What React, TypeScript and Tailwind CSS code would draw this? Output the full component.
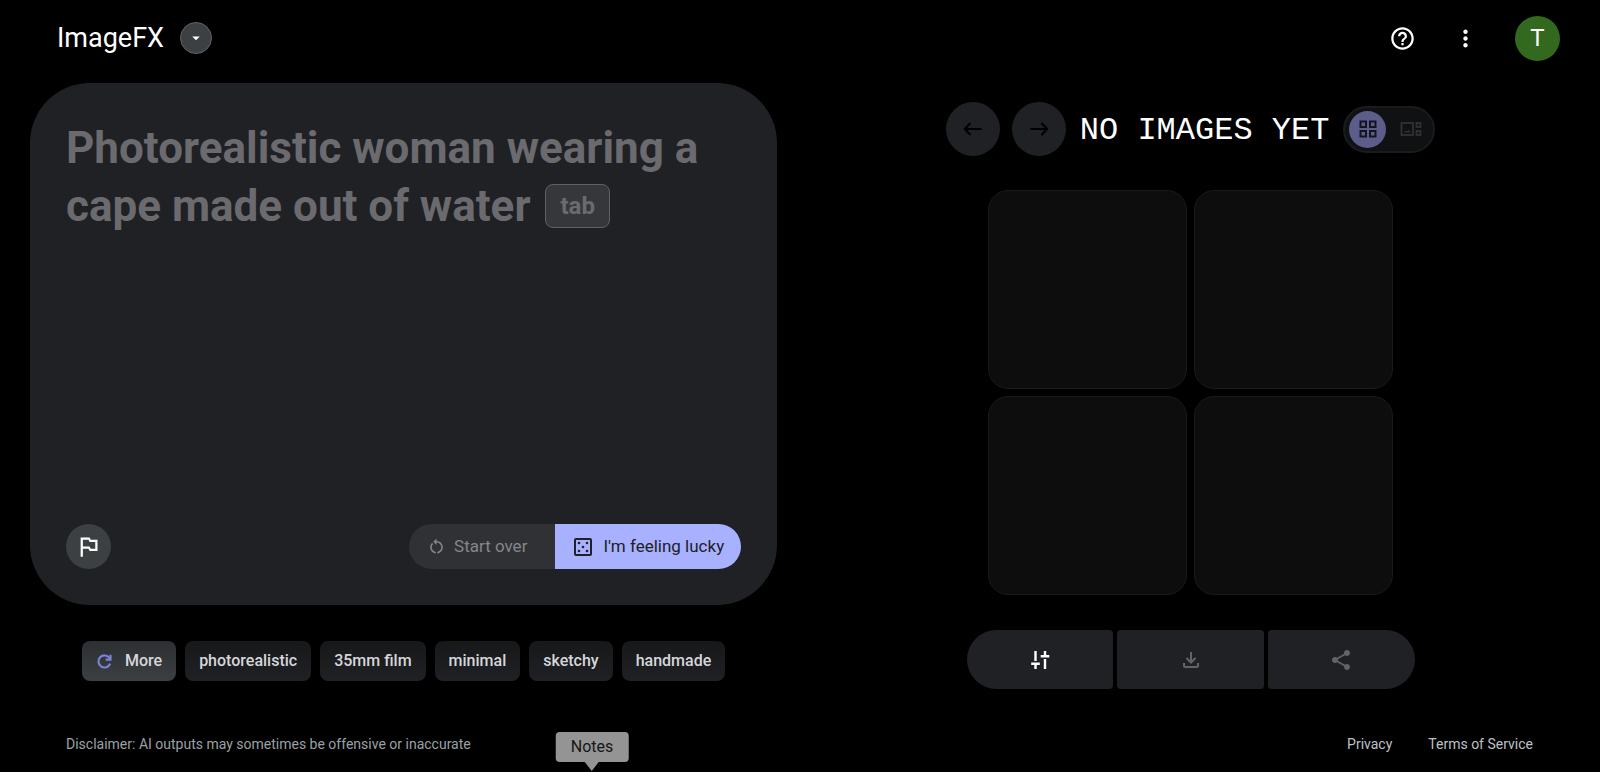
import { useState } from "react";
import {
  MdArrowDropDown,
  MdHelpOutline,
  MdMoreVert,
  MdOutlinedFlag,
  MdRestartAlt,
  MdShare,
} from "react-icons/md";

const SUGGESTIONS = [
  "photorealistic",
  "35mm film",
  "minimal",
  "sketchy",
  "handmade",
];

function ArrowIcon({ flipped = false }: { flipped?: boolean }) {
  return (
    <svg
      width="20"
      height="16"
      viewBox="0 0 20 16"
      fill="none"
      stroke="currentColor"
      strokeWidth="2"
      strokeLinejoin="round"
      className={flipped ? "rotate-180" : ""}
    >
      <path d="M18.5 8H2M7.5 2L1.8 8L7.5 14" />
    </svg>
  );
}

function RefreshIcon() {
  return (
    <svg width="17" height="17" viewBox="0 0 18 18" fill="none" stroke="currentColor" strokeWidth="2.2">
      <path d="M15 11.2A6.4 6.4 0 1 1 14.2 5.2L15.4 7" />
      <path d="M15.4 1.8V7H10.2" />
    </svg>
  );
}

function DiceIcon() {
  return (
    <svg width="18" height="18" viewBox="0 0 18 18" fill="currentColor">
      <rect x="1" y="1" width="16" height="16" rx="1" fill="none" stroke="currentColor" strokeWidth="2" />
      <circle cx="5" cy="5" r="1.3" />
      <circle cx="13" cy="5" r="1.3" />
      <circle cx="9" cy="9" r="1.3" />
      <circle cx="5" cy="13" r="1.3" />
      <circle cx="13" cy="13" r="1.3" />
    </svg>
  );
}

function GridIcon() {
  return (
    <svg width="18" height="18" viewBox="0 0 18 18" fill="none" stroke="currentColor" strokeWidth="2">
      <rect x="1.5" y="1.5" width="5.5" height="5.5" />
      <rect x="11" y="1.5" width="5.5" height="5.5" />
      <rect x="1.5" y="11" width="5.5" height="5.5" />
      <rect x="11" y="11" width="5.5" height="5.5" />
    </svg>
  );
}

function GalleryIcon() {
  return (
    <svg width="22" height="14" viewBox="0 0 22 14" fill="none" stroke="currentColor" strokeWidth="1.8">
      <rect x="1.5" y="1" width="11.5" height="12" />
      <rect x="16.5" y="1" width="4" height="4" />
      <rect x="16.5" y="9" width="4" height="4" />
      <path d="M3.8 10.5L5.6 8.4L7 9.6L8.8 8L10.8 10.5Z" fill="currentColor" stroke="none" />
    </svg>
  );
}

function TuneIcon() {
  return (
    <svg width="20" height="20" viewBox="0 0 20 20" fill="none" stroke="currentColor" strokeWidth="2.4">
      <path d="M5.5 1V11M1.2 13.8H9.8M5.5 13.8V19" />
      <path d="M15 1V6M10.7 6.2H19.3M15 9V19" />
    </svg>
  );
}

function DownloadIcon() {
  return (
    <svg width="18" height="18" viewBox="0 0 18 18" fill="none" stroke="currentColor" strokeWidth="2">
      <path d="M9 1V11M4.5 7L9 11.5L13.5 7" />
      <path d="M2 12V14.5Q2 16 3.5 16H14.5Q16 16 16 14.5V12" />
    </svg>
  );
}

function Header() {
  return (
    <header className="flex h-19 shrink-0 items-center justify-between pr-10 pl-[57px]">
      <div className="flex items-center gap-4">
        <h1 className="text-[27px] leading-8">ImageFX</h1>
        <button
          aria-label="Switch tool"
          className="flex size-8 items-center justify-center rounded-full border border-[#5f6368] bg-[#3c4043]"
        >
          <MdArrowDropDown size={18} />
        </button>
      </div>
      <div className="flex items-center">
        <button aria-label="Help" className="mr-9">
          <MdHelpOutline size={27} />
        </button>
        <button aria-label="More options" className="mr-9">
          <MdMoreVert size={27} />
        </button>
        <button
          aria-label="Account"
          className="flex size-[45px] items-center justify-center rounded-full bg-[#33691e] text-2xl"
        >
          T
        </button>
      </div>
    </header>
  );
}

function PromptCard() {
  const [prompt, setPrompt] = useState("");

  return (
    <section className="flex flex-1 flex-col justify-between rounded-[60px] bg-[#202124] p-9">
      <div className="relative min-h-32 flex-1">
        <label
          htmlFor="prompt"
          className="block text-[44px] leading-[58px] font-bold text-[#6b6a6f]"
        >
          {prompt === "" && (
            <>
              <span>Photorealistic woman wearing a</span>{" "}
              <span>cape made out of water</span>{" "}
              <kbd className="mb-1.5 ml-1 inline-flex h-11 items-center rounded-lg border border-[#5f6064] bg-[#36373a] px-[14px] align-middle font-[Roboto,sans-serif] text-2xl">
                tab
              </kbd>
            </>
          )}
        </label>
        <textarea
          id="prompt"
          value={prompt}
          onChange={(e) => setPrompt(e.target.value)}
          className="absolute inset-0 resize-none bg-transparent text-[44px] leading-[58px] font-bold outline-none"
        />
      </div>
      <div className="flex items-center justify-between">
        <button
          aria-label="Report"
          className="flex size-[45px] items-center justify-center rounded-full bg-[#3c4043]"
        >
          <MdOutlinedFlag size={27} />
        </button>
        <div className="flex h-[45px] text-[17px]">
          <button className="flex items-center gap-2 rounded-l-full bg-[#303134] pr-7 pl-[18px] text-[#85868a]">
            <MdRestartAlt size={19} />
            Start over
          </button>
          <button className="flex items-center gap-[11px] rounded-r-full bg-[#a8b1ff] pr-[17px] pl-[19px] text-[#202124]">
            <DiceIcon />
            I'm feeling lucky
          </button>
        </div>
      </div>
    </section>
  );
}

function Suggestions() {
  return (
    <div className="mt-9 mb-2 flex flex-wrap justify-center gap-[9px] text-base font-medium text-[#d6d7da]">
      <button className="flex h-10 items-center gap-3 rounded-lg bg-linear-to-b from-[#2d2f32] to-[#3c4043] px-[14px]">
        <span className="text-[#7a83d4]">
          <RefreshIcon />
        </span>
        More
      </button>
      {SUGGESTIONS.map((label) => (
        <button
          key={label}
          className="h-10 rounded-lg bg-linear-to-b from-[#17181a] to-[#202124] px-[14px]"
        >
          {label}
        </button>
      ))}
    </div>
  );
}

function ResultsPanel() {
  return (
    <section className="flex flex-1 flex-col items-center pt-[19px] pl-1">
      <div className="flex items-center">
        <button
          aria-label="Previous"
          className="flex size-[54px] items-center justify-center rounded-full bg-[#202124] text-black"
        >
          <ArrowIcon />
        </button>
        <button
          aria-label="Next"
          className="ml-3 flex size-[54px] items-center justify-center rounded-full bg-[#202124] text-black"
        >
          <ArrowIcon flipped />
        </button>
        <h2 className="mr-[14px] ml-[14px] pt-1 font-['Liberation_Mono',monospace] text-[32px] leading-10 whitespace-nowrap">
          NO IMAGES YET
        </h2>
        <div className="flex h-[47px] items-center gap-[11px] rounded-full border-2 border-[#1a1b1c] bg-[#101112] pr-2 pl-1">
          <button
            aria-label="Grid view"
            className="flex size-[37px] items-center justify-center rounded-full bg-[#5c5d8a] text-[#15151f]"
          >
            <GridIcon />
          </button>
          <button
            aria-label="Gallery view"
            className="flex h-9 w-7 items-center justify-center text-[#303234]"
          >
            <GalleryIcon />
          </button>
        </div>
      </div>

      <div className="mt-[34px] grid w-full max-w-[405px] grid-cols-2 gap-[7px]">
        {[0, 1, 2, 3].map((slot) => (
          <div
            key={slot}
            className="aspect-square rounded-[20px] border border-[#1a1a1a] bg-[#0d0d0d]"
          />
        ))}
      </div>

      <div className="mt-[35px] grid h-[59px] w-full max-w-[448px] grid-cols-3 gap-1">
        <button
          aria-label="Settings"
          className="flex items-center justify-center rounded-l-[30px] rounded-r bg-[#202124]"
        >
          <TuneIcon />
        </button>
        <button
          aria-label="Download"
          className="flex items-center justify-center rounded bg-[#202124] text-[#636467]"
        >
          <DownloadIcon />
        </button>
        <button
          aria-label="Share"
          className="flex items-center justify-center rounded-l rounded-r-[30px] bg-[#202124] text-[#636467]"
        >
          <MdShare size={24} />
        </button>
      </div>
    </section>
  );
}

function Footer() {
  return (
    <footer className="relative mt-[27px] flex h-14 shrink-0 items-center justify-between pr-[67px] pl-[66px] text-sm">
      <p className="text-[#9aa0a6]">
        Disclaimer: AI outputs may sometimes be offensive or inaccurate
      </p>
      <nav className="flex gap-9 text-[#bdc1c6]">
        <a href="#privacy">Privacy</a>
        <a href="#terms">Terms of Service</a>
      </nav>
      <div
        role="tooltip"
        className="absolute bottom-0 left-[37%] flex -translate-x-1/2 flex-col items-center"
      >
        <span className="rounded bg-[#949494] px-[15px] text-base leading-[30px] text-[#161616]">
          Notes
        </span>
        <svg width="18" height="10" viewBox="0 0 18 10" fill="#949494">
          <path d="M2 0H16L9 9Z" />
        </svg>
      </div>
    </footer>
  );
}

export default function App() {
  return (
    <div className="flex min-h-screen flex-col bg-black font-[Roboto,sans-serif] text-white">
      <Header />
      <main className="flex flex-1 pt-[7px]">
        <div className="ml-[30px] flex w-[46.7%] flex-col">
          <PromptCard />
          <Suggestions />
        </div>
        <ResultsPanel />
      </main>
      <Footer />
    </div>
  );
}
